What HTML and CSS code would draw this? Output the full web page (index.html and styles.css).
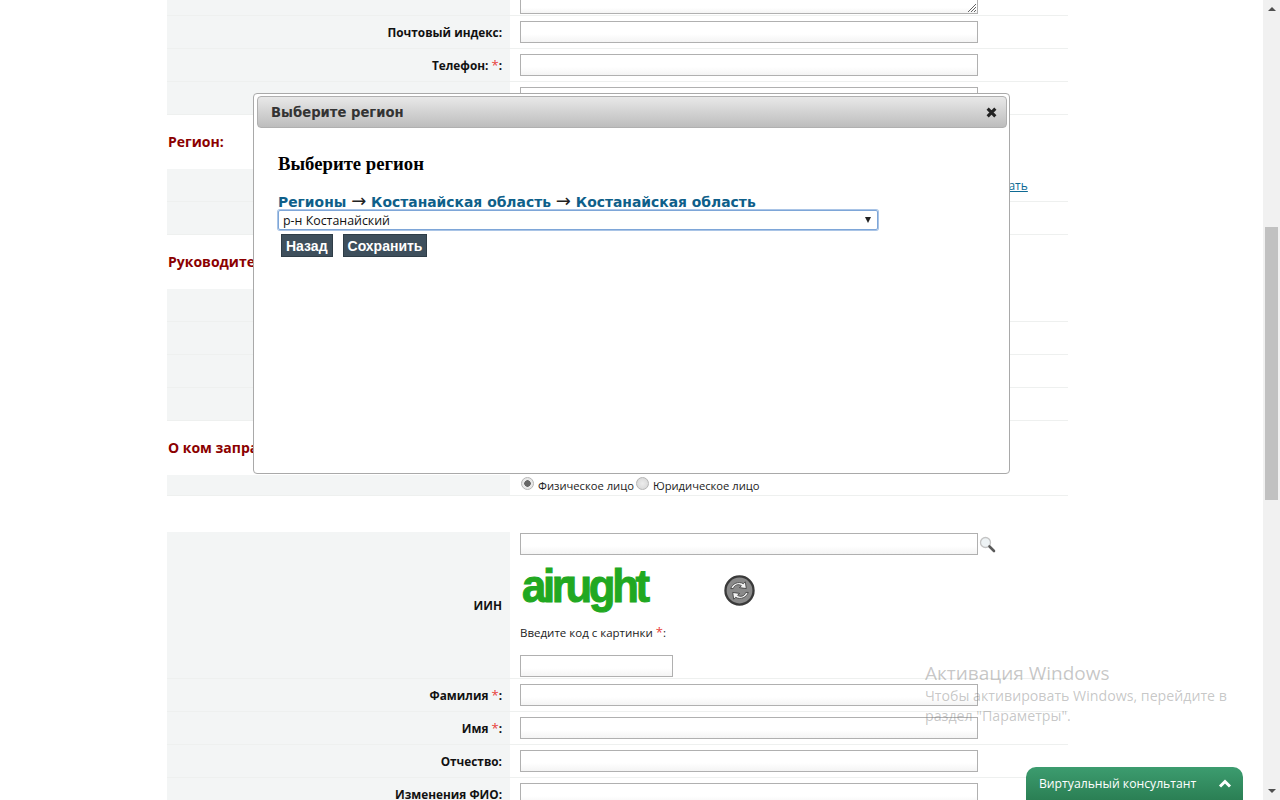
FILE: index.html
```html
<!DOCTYPE html>
<html lang="ru">
<head>
<meta charset="utf-8">
<title>Выберите регион</title>
<link rel="stylesheet" href="styles.css">
</head>
<body>
<div class="viewport">
  <main class="page">
    <div class="form">
      <div class="row row-first"><div class="label"></div><div class="value value-end"><div class="field textarea"><svg class="grip" width="10" height="10" viewBox="0 0 10 10"><path d="M9 1 1 9M9 4 4 9M9 7 7 9" stroke="#666" stroke-width="1" fill="none"/></svg></div></div></div>
      <div class="row"><div class="label">Почтовый индекс:</div><div class="value"><div class="field"></div></div></div>
      <div class="row"><div class="label">Телефон: <span class="req">*</span>:</div><div class="value"><div class="field"></div></div></div>
      <div class="row"><div class="label"></div><div class="value"><div class="field"></div></div></div>
      <h3 class="section">Регион:</h3>
      <div class="row"><div class="label"></div><div class="value"><a class="change" href="#">Изменить или указать</a></div></div>
      <div class="row"><div class="label"></div><div class="value"></div></div>
      <h3 class="section">Руководитель</h3>
      <div class="row"><div class="label"></div><div class="value"></div></div>
      <div class="row"><div class="label"></div><div class="value"></div></div>
      <div class="row"><div class="label"></div><div class="value"></div></div>
      <div class="row"><div class="label"></div><div class="value"></div></div>
      <h3 class="section">О ком запрашивается</h3>
      <div class="row row-type"><div class="label"></div><div class="value value-radio">
        <span class="radio radio-on"></span><span class="radio-text">Физическое лицо</span><span class="radio"></span><span class="radio-text">Юридическое лицо</span>
      </div></div>
      <div class="row row-iin">
        <div class="label">ИИН</div>
        <div class="value value-stack">
          <div class="search-line"><div class="field"></div>
            <svg class="magnifier" width="17" height="17" viewBox="0 0 17 17"><circle cx="6.500" cy="6.500" r="5" fill="#eef3f5" stroke="#c4c4c4" stroke-width="1.300"/><path d="M10.500 10.500l4.500 4.500" stroke="#5a5a5a" stroke-width="2.600" stroke-linecap="round"/></svg>
          </div>
          <div class="captcha-line">
            <div class="captcha"><span class="cap-text">airught</span></div>
            <svg class="refresh" width="31" height="31" viewBox="0 0 32 32"><circle cx="16" cy="16" r="14.500" fill="#8a8a8a" stroke="#3a3a3a" stroke-width="2.400"/><path d="M7 14c1.500-5 8-8 13-5l2-2 1 7-7-1 2-2c-3-2-7-1-8.500 3z" fill="#f4f4f4" stroke="#333" stroke-width=".8"/><path d="M25 18c-1.500 5-8 8-13 5l-2 2-1-7 7 1-2 2c3 2 7 1 8.500-3z" fill="#f4f4f4" stroke="#333" stroke-width=".8"/></svg>
          </div>
          <div class="captcha-label">Введите код с картинки <span class="req">*</span>:</div>
          <div class="field field-short"></div>
        </div>
      </div>
      <div class="row"><div class="label">Фамилия <span class="req">*</span>:</div><div class="value"><div class="field"></div></div></div>
      <div class="row"><div class="label">Имя <span class="req">*</span>:</div><div class="value"><div class="field"></div></div></div>
      <div class="row"><div class="label">Отчество:</div><div class="value"><div class="field"></div></div></div>
      <div class="row"><div class="label">Изменения ФИО:</div><div class="value"><div class="field"></div></div></div>
    </div>
  </main>
  <div class="scrollbar">
    <span class="arrow arrow-up"></span>
    <div class="track"><div class="thumb"></div></div>
    <span class="arrow arrow-down"></span>
  </div>
</div>

<section class="modal">
  <header class="modal-bar">
    <span class="modal-title">Выберите регион</span>
    <svg class="close" width="11" height="11" viewBox="0 0 10 10"><path d="M1.500 1.500l7 7M8.500 1.500l-7 7" stroke="#222" stroke-width="2.800"/></svg>
  </header>
  <div class="modal-body">
    <h2 class="modal-heading">Выберите регион</h2>
    <div class="crumbs"><a href="#">Регионы</a> <span class="crumb-arrow">→</span> <a href="#">Костанайская область</a> <span class="crumb-arrow">→</span> <a href="#">Костанайская область</a></div>
    <div class="select"><span>р-н Костанайский</span><span class="select-arrow"></span></div>
    <div class="buttons"><button class="btn" type="button">Назад</button><button class="btn" type="button">Сохранить</button></div>
  </div>
</section>

<aside class="watermark">
  <div class="wm-title">Активация Windows</div>
  <div class="wm-text">Чтобы активировать Windows, перейдите в<br>раздел "Параметры".</div>
</aside>

<aside class="chat">
  <span>Виртуальный консультант</span>
  <svg width="14" height="9" viewBox="0 0 14 9"><path d="M2 7.500l5-5 5 5" fill="none" stroke="#fff" stroke-width="3"/></svg>
</aside>
</body>
</html>
```
FILE: styles.css
```css
* { box-sizing: border-box; }
html, body { margin: 0; height: 100%; overflow: hidden; background: #fff; }
body { font-family: "Open Sans", "Liberation Sans", sans-serif; color: #111; }

.viewport { display: flex; width: 1280px; height: 800px; overflow: hidden; }
.page { flex: 1; padding-left: 167px; overflow: hidden; }
.form { width: 901px; }

.row { display: flex; height: 33px; border-bottom: 1px solid #eef0ef; }
.row-first { height: 16px; }
.row-type { height: 21px; margin-bottom: 36px; }
.row-iin { height: 147px; }
.label { width: 343px; padding-right: 8px; background: #f3f5f5; font-size: 11.800px; font-weight: 700; text-align: right; line-height: 33px; }
.row-iin .label { line-height: 147px; }
.value { flex: 1; padding: 5px 0 0 10px; }
.value-end { padding-top: 0; display: flex; align-items: flex-end; padding-bottom: 1px; }
.req { color: #e8403a; font-weight: 400; font-size: 13px; line-height: 1; }

.field { position: relative; width: 458px; height: 22px; border: 1px solid #b0b0b0; background: linear-gradient(#fff 60%, #f4f4f4); }
.field-short { width: 153px; }
.textarea { height: 14px; border-top: 0; }
.grip { position: absolute; right: 0; bottom: 0; }

.section { margin: 0; height: 54px; padding: 18px 0 0 1px; font-size: 14px; line-height: 18px; font-weight: 700; color: #8b0000; }

.change { display: block; margin: 3px 0 0 377px; font-size: 12px; color: #0e6a94; white-space: nowrap; }

.value-radio { display: flex; align-items: center; padding: 0 0 0 11px; font-size: 11.200px; }
.radio { width: 13px; height: 13px; border-radius: 50%; border: 1px solid #b5b5b5; background: radial-gradient(circle, #ececec, #d4d4d4); margin-top: -4px; }
.radio-on { background: radial-gradient(circle, #666 0 3px, #e8e8e8 3.500px); }
.radio-text { margin: 0 0 0 4px; color: #222; }
.radio-text + .radio { margin-left: 2px; }

.value-stack { display: flex; flex-direction: column; padding-top: 1px; }
.search-line { display: flex; align-items: center; gap: 1px; }
.magnifier { margin-top: 1px; }
.captcha-line { display: flex; align-items: center; height: 57px; margin-top: 6px; }
.captcha { align-self: flex-start; width: 204px; height: 52px; padding: 2px 0 0 2px; }
.cap-text { display: block; width: 160px; font-family: "Liberation Sans", sans-serif; font-size: 46px; font-weight: 700; line-height: 46px; letter-spacing: -3.500px; color: #21a821; -webkit-text-stroke: 1px #21a821; transform: scaleX(.95); transform-origin: left center; }
.refresh { margin-top: 1px; }
.captcha-label { margin-top: 6px; font-size: 11.500px; line-height: 18px; color: #222; }
.field-short { margin-top: 13px; }

.scrollbar { width: 17px; background: #f1f1f1; display: flex; flex-direction: column; align-items: center; }
.track { flex: 1; width: 100%; padding: 216px 2px 0; }
.thumb { height: 273px; background: #c1c1c1; }
.arrow { width: 0; height: 0; border-left: 4px solid transparent; border-right: 4px solid transparent; }
.arrow-up { margin-top: 7px; border-bottom: 4px solid #505050; }
.arrow-down { margin-bottom: 7px; border-top: 4px solid #505050; }

.modal { position: absolute; left: 253px; top: 93px; width: 757px; height: 381px; padding: 2px 2px 3px 3px; background: #fff; border: 1px solid #a9a9a9; border-radius: 4px; }
.modal-bar { display: flex; align-items: center; justify-content: space-between; height: 32px; padding: 0 9px 0 13px; border: 1px solid #b0b0b0; border-radius: 4px; background: linear-gradient(#e8e8e8, #bdbdbd); }
.modal-title { font-family: "DejaVu Sans", sans-serif; font-size: 13.200px; font-weight: 700; color: #333; }
.modal-body { padding: 25px 0 0 21px; }
.modal-heading { margin: 0; font-family: "Liberation Serif", serif; font-size: 18.720px; line-height: 22px; font-weight: 700; color: #000; }
.crumbs { margin-top: 19px; font-family: "DejaVu Sans", sans-serif; font-size: 13.900px; line-height: 16px; font-weight: 700; white-space: nowrap; }
.crumbs a { color: #0e5f8a; text-decoration: none; }
.crumb-arrow { font-family: "DejaVu Sans", sans-serif; font-size: 18px; line-height: 0; font-weight: 400; color: #222; }
.select { display: flex; align-items: center; justify-content: space-between; width: 600px; height: 20px; padding: 0 5px 0 4px; border: 1px solid #7ea6d8; box-shadow: 0 0 0 1px #a9c4e6; border-radius: 2px; font-size: 12.400px; color: #111; }
.select-arrow { width: 0; height: 0; border-left: 3.500px solid transparent; border-right: 3.500px solid transparent; border-top: 6px solid #222; margin-right: 1px; }
.buttons { display: flex; gap: 10px; margin: 4px 0 0 3px; }
.btn { height: 23px; padding: 0 4px; border: 1px solid #2f3d47; border-radius: 0; background: #3e4f5c; color: #fff; font-family: "Liberation Sans", sans-serif; font-size: 14px; font-weight: 700; }

.watermark { position: absolute; left: 925px; top: 660px; color: rgba(120, 120, 120, .42); font-family: "Open Sans", sans-serif; pointer-events: none; }
.wm-title { font-size: 19px; line-height: 26px; }
.wm-text { font-size: 14.200px; line-height: 20px; }

.chat { position: absolute; left: 1026px; top: 767px; width: 217px; height: 33px; display: flex; align-items: center; justify-content: space-between; padding: 0 11px 0 13px; border-radius: 10px 10px 0 0; background: linear-gradient(#3c9c6f, #2b7f54); color: #fff; font-size: 12.200px; }
```
